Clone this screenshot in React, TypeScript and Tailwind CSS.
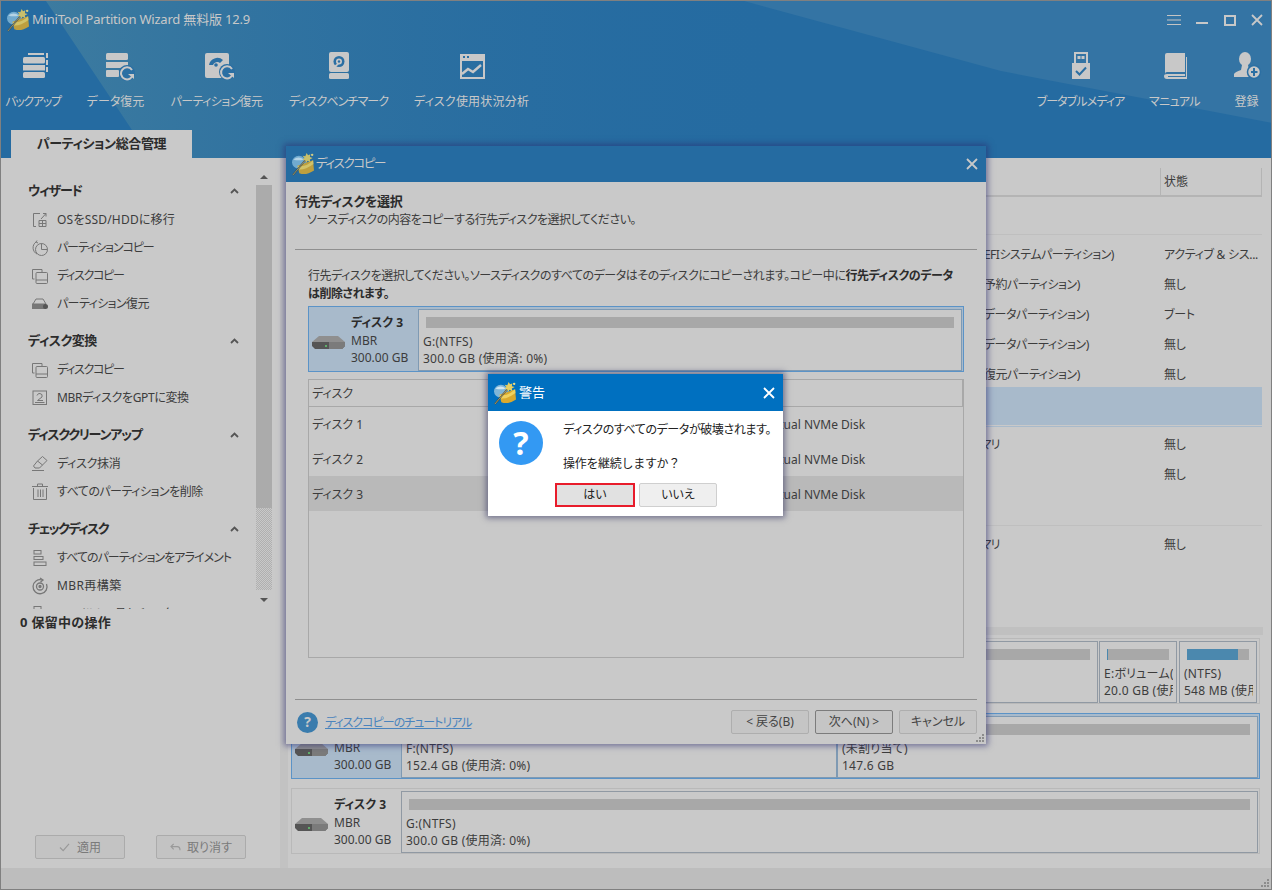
import type { ReactNode } from 'react';

const Logo = ({ className = '' }: { className?: string }) => (
  <svg viewBox="0 0 24 26" className={className}>
    <ellipse cx="7.500" cy="11" rx="7.500" ry="7" fill="#7fb6d8" />
    <path d="M1.500 8 Q7 4 13 8 Q7 10 1.500 8 Z" fill="#cfe6f2" />
    <path d="M6 15 L23 9 L24 20 Q15 26 8 23 Z" fill="#d9a92e" />
    <path d="M6 15 Q15 17 23 9 L23.400 13 Q14 20 7 19 Z" fill="#efd25f" />
    <path d="M1 25 L17 6" stroke="#4f4420" strokeWidth="1.700" />
    <path d="M1 25 L17 6" stroke="#e8e0b0" strokeWidth="0.600" />
    <path d="M16 1 l1.500 2.500 2.500-1-.5 3 3 1-3 1.500 .5 3-3-1.500-1.500 2.500-1-3-3-.5 2-2-2-2.500 3 .5z" fill="#e6cf62" />
    <circle cx="22" cy="3" r="1.300" fill="#f0de80" />
  </svg>
);

const DiskIcon = () => (
  <svg viewBox="0 0 33 15" className="w-[33px] h-[15px] shrink-0">
    <path d="M0 7 L7 1 H26 L33 7 Z" fill="#8f8f8f" />
    <path d="M0 7 H33 V11 L30 14 H3 L0 11 Z" fill="#555" />
    <path d="M17 7 H33 V11 L30 14 H17 Z" fill="#7b7b7b" />
    <rect x="13" y="10" width="2" height="2" fill="#5fae6a" />
  </svg>
);

const ToolIcon = ({ children }: { children: ReactNode }) => (
  <svg viewBox="0 0 32 30" className="w-[32px] h-[30px] fill-[#c8c8c8]">
    {children}
  </svg>
);

const arc = (cx: number, cy: number) => (
  <>
    <circle cx={cx} cy={cy} r="8" fill="#2b6fa3" />
    <path d={`M${cx + 5} ${cy - 3} A6 6 0 1 0 ${cx + 6} ${cy + 1}`} fill="none" strokeWidth="2" stroke="#c8c8c8" />
    <path d={`M${cx + 1} ${cy + 1} h6 v5 z`} />
  </>
);

const tools: { label: string; w: string; track: string; shift: string; icon: ReactNode }[] = [
  {
    label: 'バックアップ',
    w: 'w-[56px]',
    track: 'tracking-[-1.3px]',
    shift: 'ml-[3px]',
    icon: (
      <ToolIcon>
        <path d="M9 2 H25 V4 H9 Z M27 2 h2 v5 h-2 Z M27 9 h2 v5 h-2 Z M27 16 h2 v5 h-2 Z" />
        <rect x="4" y="6" width="22" height="6.500" rx="1.500" />
        <rect x="4" y="14" width="22" height="5.500" />
        <rect x="4" y="21" width="22" height="6" rx="1.500" />
      </ToolIcon>
    ),
  },
  {
    label: 'データ復元',
    w: 'w-[57px]',
    track: 'tracking-normal',
    shift: 'ml-[6px]',
    icon: (
      <ToolIcon>
        <rect x="3" y="2" width="22" height="7" rx="1.500" />
        <rect x="3" y="11" width="22" height="6" />
        <rect x="3" y="19" width="13" height="7" rx="1" />
        {arc(24, 22)}
      </ToolIcon>
    ),
  },
  {
    label: 'パーティション復元',
    w: 'w-[93px]',
    track: 'tracking-[-0.6px]',
    shift: 'ml-[5px]',
    icon: (
      <ToolIcon>
        <rect x="2" y="2" width="24" height="25" rx="2" />
        <path d="M6 14 A8.500 8.500 0 0 1 20 9 L17 12 A4.500 4.500 0 0 0 10 14 Z" fill="#2b6fa3" />
        <circle cx="13" cy="14" r="1.800" fill="#2b6fa3" />
        {arc(24, 21)}
      </ToolIcon>
    ),
  },
  {
    label: 'ディスクベンチマーク',
    w: 'w-[99px]',
    track: 'tracking-[-0.9px]',
    shift: 'ml-0',
    icon: (
      <ToolIcon>
        <rect x="6" y="1" width="20" height="20" rx="2" />
        <rect x="6" y="22" width="20" height="6" rx="1.500" />
        <circle cx="16" cy="10.500" r="5.500" fill="#2b6fa3" />
        <circle cx="16" cy="10.500" r="3" />
        <circle cx="16" cy="10.500" r="1.200" fill="#2b6fa3" />
        <path d="M11 15 l4-3 1 1-3 3z" />
      </ToolIcon>
    ),
  },
  {
    label: 'ディスク使用状況分析',
    w: 'w-[115px]',
    track: 'tracking-[0.2px]',
    shift: 'ml-0',
    icon: (
      <ToolIcon>
        <path fillRule="evenodd" d="M4 3 h25 v25 h-25 Z M6 10 v16 h21 v-16 Z" />
        <rect x="7" y="5" width="2" height="2" fill="#2b6fa3" />
        <rect x="11" y="5" width="2" height="2" fill="#2b6fa3" />
        <path d="M6 23 L12 18 L17 21 L25 14" fill="none" strokeWidth="2.400" stroke="#c8c8c8" />
      </ToolIcon>
    ),
  },
];

const rightTools: { label: string; w: string; track: string; gap: string; icon: ReactNode }[] = [
  {
    label: 'ブータブルメディア',
    w: 'w-[89px]',
    track: 'tracking-[-0.9px]',
    gap: 'ml-0',
    icon: (
      <ToolIcon>
        <path fillRule="evenodd" d="M9 1 h14 v11 h2 v16 h-18 v-16 h2 Z M11 3 v9 h10 v-9 Z" />
        <rect x="12.500" y="5" width="3" height="3" />
        <rect x="16.500" y="5" width="3" height="3" />
        <path d="M11 20 l3.500 3.500 6.500-7" fill="none" strokeWidth="2" stroke="#2b6fa3" />
      </ToolIcon>
    ),
  },
  {
    label: 'マニュアル',
    w: 'w-[51px]',
    track: 'tracking-[-0.6px]',
    gap: 'ml-[24px]',
    icon: (
      <ToolIcon>
        <path d="M6 4 Q6 2 8 2 H26 V21 H8 Q6 21 6 23 Z" />
        <path d="M28 6 V28 H8 Q5 28 5 25 Q5 23 8 23 H26 V25 H9 V26 H27 V6 Z" />
      </ToolIcon>
    ),
  },
  {
    label: '登録',
    w: 'w-[27px]',
    track: 'tracking-normal',
    gap: 'ml-[33px]',
    icon: (
      <ToolIcon>
        <ellipse cx="14" cy="8" rx="6" ry="7" />
        <path d="M11 14 H17 L18 19 L24 22 V26 H3 V23 Q4 21 10 19 Z" />
        <circle cx="23" cy="21" r="6.500" stroke="#2b6fa3" strokeWidth="1.500" />
        <path d="M20 20 h2 v-3 h2 v3 h2.500 v2 h-2.500 v3 h-2 v-3 h-2 z" fill="#2b6fa3" />
      </ToolIcon>
    ),
  },
];

const MenuIcon = ({ kind }: { kind: string }) => {
  const p = { fill: 'none', stroke: '#777', strokeWidth: 1 };
  return (
    <svg viewBox="0 0 18 18" className="w-[18px] h-[18px] shrink-0">
      {kind === 'os' && (
        <g {...p}>
          <path d="M9 2.500 H2.500 V15.500 H5" />
          <path d="M10 8 L15 2.500 M12 2.500 h3 v3" />
          <path d="M8 15.500 V9.500 H15 V15.500 Z M8 12.500 H15 M11.500 9.500 V15.500" />
        </g>
      )}
      {kind === 'pcopy' && (
        <g {...p}>
          <path d="M5 3 A7 7 0 0 0 6 15" />
          <circle cx="10.500" cy="10.500" r="6" />
          <path d="M10.500 4.500 V10.500 H16.500" />
          <path d="M6 1.500 L5 3 L7 4" />
        </g>
      )}
      {kind === 'dcopy' && (
        <g {...p}>
          <path d="M3.500 12 H1.500 V2.500 H11 V5" />
          <rect x="5" y="5.500" width="11.500" height="11" rx="1" />
          <path d="M5 13 H16.500" />
        </g>
      )}
      {kind === 'prec' && (
        <g {...p}>
          <path d="M2 9 L5 4 H12 L15 9" />
          <rect x="1.500" y="9" width="13" height="4.500" fill="#777" />
          <circle cx="14.500" cy="11.500" r="2.500" fill="#555" stroke="none" />
        </g>
      )}
      {kind === 'mbr' && (
        <g {...p}>
          <rect x="2" y="2" width="13.500" height="13.500" />
          <path d="M6 6.500 Q7 4 9 4.500 Q12 5 11 8 L6.500 11.500 H12 M4 13.500 H13.500" />
        </g>
      )}
      {kind === 'erase' && (
        <g {...p}>
          <path d="M6.500 6 L11.500 1.500 L16 5.500 L8.500 13 H4 L2.500 11 Z M6.500 6 L11.500 10" />
          <path d="M1 15.500 H13" />
        </g>
      )}
      {kind === 'trash' && (
        <g {...p}>
          <path d="M1 3.500 H17 M6.500 3.500 V1 H11.500 V3.500" />
          <path d="M2.500 5 V16.500 H15.500 V5 M7 6.500 V14 M9.500 6.500 V14 M12 6.500 V14" />
        </g>
      )}
      {kind === 'align' && (
        <g {...p}>
          <rect x="3" y="1.500" width="7" height="3.500" />
          <rect x="3" y="7.500" width="9" height="3" />
          <rect x="3" y="13" width="12" height="3.500" />
        </g>
      )}
      {kind === 'rebuild' && (
        <g {...p} strokeWidth={1.300}>
          <path d="M11 3 A7 7 0 1 0 15.500 7" />
          <path d="M9 1 L12 3 L9.500 5" />
          <circle cx="9" cy="9.500" r="3.500" />
          <circle cx="9" cy="9.500" r="1" fill="#777" />
        </g>
      )}
    </svg>
  );
};

const sections = [
  {
    title: 'ウィザード',
    track: 'tracking-[-1.2px]',
    items: [
      ['os', 'OSをSSD/HDDに移行', 'tracking-[0.2px]'],
      ['pcopy', 'パーティションコピー', 'tracking-[-1.1px]'],
      ['dcopy', 'ディスクコピー', 'tracking-[-1.3px]'],
      ['prec', 'パーティション復元', 'tracking-[-0.6px]'],
    ],
  },
  {
    title: 'ディスク変換',
    track: 'tracking-[-0.5px]',
    items: [
      ['dcopy', 'ディスクコピー', 'tracking-[-1.3px]'],
      ['mbr', 'MBRディスクをGPTに変換', 'tracking-[-0.35px]'],
    ],
  },
  {
    title: 'ディスククリーンアップ',
    track: 'tracking-[-1.2px]',
    items: [
      ['erase', 'ディスク抹消', 'tracking-[-0.3px]'],
      ['trash', 'すべてのパーティションを削除', 'tracking-[-0.5px]'],
    ],
  },
  {
    title: 'チェックディスク',
    track: 'tracking-[-1.5px]',
    items: [
      ['align', 'すべてのパーティションをアライメント', 'tracking-[-0.95px]'],
      ['rebuild', 'MBR再構築', 'tracking-[0.4px]'],
      ['align', 'ファイルシステムチェック', 'tracking-[-0.9px]'],
    ],
  },
];

const rows = [
  { type: 'GPT (EFIシステムパーティション)', status: 'アクティブ & シス...' },
  { type: 'GPT (予約パーティション)', status: '無し' },
  { type: 'GPT (データパーティション)', status: 'ブート' },
  { type: 'GPT (データパーティション)', status: '無し' },
  { type: 'GPT (復元パーティション)', status: '無し' },
];

const TableRow = ({ type, status, primary = false }: { type: string; status: string; primary?: boolean }) => (
  <div className="h-[30px] shrink-0 flex items-center text-[12px] text-[#3c3c3c] whitespace-nowrap">
    <span className={`w-[876px] ${primary ? 'pl-[663px] tracking-[-0.8px]' : 'pl-[669px] tracking-[-0.5px]'}`}>{type}</span>
    <span className="tracking-[-0.3px]">{status}</span>
  </div>
);

const Partition = ({
  label,
  size,
  className = '',
  fill,
  selected = false,
}: {
  label: string;
  size: string;
  className?: string;
  fill?: string;
  selected?: boolean;
}) => (
  <div className={`h-[62px] border whitespace-nowrap text-[12px] tracking-[0.25px] text-[#3c3c3c] bg-[#c9c9c9] ${selected ? 'border-[#7f9ab3]' : 'border-[#9099a3]'} ${className}`}>
    <div className="h-[11px] mx-[7px] mt-[7px] bg-[#a8a8a8] flex">
      {fill && <div className={`h-full bg-[#4b88ae] ${fill}`} />}
    </div>
    <div className="ml-[4px] mr-[3px] overflow-hidden mt-[5px] leading-[17px]">{label}</div>
    <div className="ml-[4px] mr-[3px] overflow-hidden leading-[18px]">{size}</div>
  </div>
);

const DiskRow = ({
  name,
  selected = false,
  children,
}: {
  name: string;
  selected?: boolean;
  children: ReactNode;
}) => (
  <div className={`h-[66px] flex border py-[2px] pr-[1px] ${selected ? 'border-[#5b93c7] bg-[#a8bacb]' : 'border-[#b9b9b9]'}`}>
    <div className="w-[109px] shrink-0 flex pl-[3px]">
      <div className="mt-[26px]">
        <DiskIcon />
      </div>
      <div className="ml-[6px] text-[12px] leading-[17.5px] text-[#3c3c3c] whitespace-nowrap pt-[6px]">
        <div className="font-bold text-[#2c2c2c] leading-[16.5px]">{name}</div>
        <div>MBR</div>
        <div>300.00 GB</div>
      </div>
    </div>
    {children}
  </div>
);

const Grip = ({ className = '' }: { className?: string }) => (
  <svg viewBox="0 0 10 10" className={`w-[10px] h-[10px] fill-[#8c8c8c] ${className}`}>
    <rect x="7" y="1" width="2" height="2" />
    <rect x="4" y="4" width="2" height="2" />
    <rect x="7" y="4" width="2" height="2" />
    <rect x="1" y="7" width="2" height="2" />
    <rect x="4" y="7" width="2" height="2" />
    <rect x="7" y="7" width="2" height="2" />
  </svg>
);

const Close = ({ stroke }: { stroke: string }) => (
  <svg viewBox="0 0 12 12" className="w-[12px] h-[12px]" fill="none" stroke={stroke} strokeWidth="1.800">
    <path d="M1 1 L11 11 M11 1 L1 11" />
  </svg>
);

const Caret = () => (
  <svg viewBox="0 0 9 6" className="w-[9px] h-[6px]" fill="none" stroke="#555" strokeWidth="1.800">
    <path d="M1 5 L4.500 1.500 L8 5" />
  </svg>
);

const DlgButton = ({ label, active = false }: { label: string; active?: boolean }) => (
  <div className={`w-[78px] h-[24px] flex items-center justify-center rounded-[2px] border text-[12px] text-[#444] bg-[#c5c5c5] ${active ? 'border-[#7c7c7c]' : 'border-[#aeaeae]'}`}>
    {label}
  </div>
);

export default function App() {
  return (
    <div className="relative w-[1272px] h-[890px] overflow-hidden flex flex-col border border-[#808080] bg-[#c9c9c9] [font-family:'Noto_Sans','Noto_Sans_CJK_JP',sans-serif] [font-feature-settings:'palt'] text-[#3c3c3c]">
      {/* header */}
      <header className="relative h-[157px] shrink-0 bg-[#256ba1] overflow-hidden">
        <svg viewBox="0 0 1270 157" className="absolute inset-0 w-full h-full">
          <defs>
            <linearGradient id="wedge" x1="0" x2="1" y1="0" y2="0">
              <stop offset="0" stopColor="#44809f" stopOpacity="0.75" />
              <stop offset="1" stopColor="#256ba1" stopOpacity="0" />
            </linearGradient>
          </defs>
          <polygon points="45,0 137,138 146,157 800,157 800,0" fill="url(#wedge)" />
          <polygon points="743,0 1000,70 1271,122 1271,0" fill="#3474a4" />
        </svg>
        <div className="relative h-[38px] flex items-center pl-[6px]">
          <Logo className="w-[22px] h-[24px] opacity-85" />
          <span className="ml-[3px] text-[13px] tracking-[-0.2px] text-[#c8c8c8] whitespace-nowrap">MiniTool Partition Wizard 無料版 12.9</span>
          <div className="ml-auto flex items-center gap-[15px] pr-[8px]">
            <svg viewBox="0 0 14 12" className="w-[14px] h-[12px]" fill="none" stroke="#c4c4c4">
              <path d="M0 1.500 H14 M0 6 H14 M0 10.500 H14" />
            </svg>
            <div className="w-[12px] h-[2px] mt-[5px] bg-[#c8c8c8]" />
            <div className="w-[12px] h-[11px] border-2 border-[#c8c8c8] ml-[1px]" />
            <Close stroke="#c8c8c8" />
          </div>
        </div>
        <div className="relative flex justify-between pl-[4px] pr-[11px] mt-[12px]">
          <div className="flex gap-[26px]">
            {tools.map((t) => (
              <div key={t.label} className={`${t.w} flex flex-col items-center`}>
                <div className={`h-[30px] flex justify-center ${t.shift}`}>{t.icon}</div>
                <div className={`mt-[12px] text-[12px] leading-[18px] whitespace-nowrap text-[#c8c8c8] ${t.track}`}>{t.label}</div>
              </div>
            ))}
          </div>
          <div className="flex">
            {rightTools.map((t) => (
              <div key={t.label} className={`${t.w} ${t.gap} flex flex-col items-center`}>
                <div className="h-[30px] flex justify-center">{t.icon}</div>
                <div className={`mt-[12px] text-[12px] leading-[18px] whitespace-nowrap text-[#c8c8c8] ${t.track}`}>{t.label}</div>
              </div>
            ))}
          </div>
        </div>
        <div className="absolute left-[10px] bottom-0 w-[181px] h-[28px] bg-[#c9c9c9] flex items-center justify-center text-[13px] tracking-[-0.4px] font-bold text-[#2c2c2c]">
          パーティション総合管理
        </div>
      </header>

      <div className="flex-1 min-h-0 flex">
        {/* sidebar */}
        <aside className="w-[279px] shrink-0 flex flex-col">
          <div className="h-[441px] mt-[10px] overflow-hidden flex">
            <div className="w-[255px] pt-[8px]">
              {sections.map((s) => (
                <div key={s.title} className="mb-[8px]">
                  <div className="h-[30px] flex items-center justify-between pl-[27px] pr-[17px] text-[13px] font-bold text-[#2c2c2c]">
                    <span className={s.track}>{s.title}</span>
                    <Caret />
                  </div>
                  {s.items.map(([icon, label, track], i) => (
                    <div key={i} className="h-[28px] flex items-center pl-[30px] text-[12px] whitespace-nowrap">
                      <MenuIcon kind={icon} />
                      <span className={`ml-[8px] ${track}`}>{label}</span>
                    </div>
                  ))}
                </div>
              ))}
            </div>
            <div className="w-[16px] flex flex-col items-center">
              <div className="h-[17px] w-full flex items-center justify-center">
                <div className="w-0 h-0 border-x-[4px] border-x-transparent border-b-[4px] border-b-[#555]" />
              </div>
              <div className="w-full h-[323px] bg-[#ababab]" />
              <div className="w-full h-[82px] bg-[repeating-conic-gradient(#b0b0b0_0_25%,#c9c9c9_0_50%)] bg-[length:2px_2px]" />
              <div className="h-[19px] w-full flex items-center justify-center">
                <div className="w-0 h-0 border-x-[4px] border-x-transparent border-t-[4px] border-t-[#555]" />
              </div>
            </div>
          </div>
          <div className="pl-[19px] mt-[4px] text-[13px] tracking-[0.3px] font-bold leading-[18px] text-[#2c2c2c]">0 保留中の操作</div>
          <div className="mt-auto mb-[9px] flex gap-[31px] pl-[34px]">
            <div className="w-[90px] h-[24px] pt-[1px] rounded-[2px] border border-[#ababab] bg-[#c3c3c3] flex items-center justify-center gap-[7px] text-[12px] text-[#7a7a7a]">
              <svg viewBox="0 0 12 10" className="w-[11px] h-[9px]" fill="none" stroke="#999" strokeWidth="1.300">
                <path d="M1 5 L4.500 8.500 L11 1" />
              </svg>
              適用
            </div>
            <div className="w-[90px] h-[24px] pt-[1px] rounded-[2px] border border-[#ababab] bg-[#c3c3c3] flex items-center justify-center gap-[6px] text-[12px] text-[#7a7a7a]">
              <svg viewBox="0 0 12 10" className="w-[11px] h-[9px]" fill="none" stroke="#999" strokeWidth="1.300">
                <path d="M4 1 L1 4 L4 7 M1 4 H8 Q11 4 11 8" />
              </svg>
              取り消す
            </div>
          </div>
        </aside>
        <div className="w-[8px] shrink-0 bg-[#c2c2c2]" />

        {/* partition list + disk map */}
        <main className="flex-1 min-w-0 flex flex-col pt-[10px]">
          <div className="h-[29px] shrink-0 flex justify-end border-b-2 border-[#b4b4b4] mr-[9px]">
            <div className="w-[102px] border-x border-[#b4b4b4] pl-[3px] pt-[1px] flex items-center text-[12px]">状態</div>
          </div>
          <div className="h-[38px] shrink-0 border-b border-[#bfbfbf] mr-[9px]" />
          <div className="h-[5px] shrink-0" />
          {rows.map((r, i) => (
            <TableRow key={i} type={r.type} status={r.status} />
          ))}
          <div className="h-[38px] -mt-[3px] shrink-0 mr-[9px] bg-[#a8bacb]" />
          <div className="h-[1px] mt-[1px] shrink-0 mr-[9px] bg-[#a8bacb]" />
          <div className="h-[3px] shrink-0" />
          <TableRow type="プライマリ" status="無し" primary />
          <TableRow type="" status="無し" />
          <div className="h-[36px] shrink-0 border-b border-[#bfbfbf] mr-[9px]" />
          <div className="h-[4px] shrink-0" />
          <TableRow type="プライマリ" status="無し" primary />
          <div className="flex-1" />

          <div className="h-[8px] shrink-0 mr-[8px] bg-[#c0c0c0]" />
          <div className="mt-[3px] ml-[3px] mr-[11px] mb-[14px] flex flex-col gap-[9px]">
            <DiskRow name="ディスク 1">
              <Partition className="flex-1 min-w-0" label="C:(NTFS)" size="" />
              <Partition className="w-[78px] ml-[1px]" label="E:ボリューム(NTFS)" size="20.0 GB (使用済: 0%)" fill="w-[1px]" />
              <Partition className="w-[78px] ml-[2px] mr-[1px]" label="(NTFS)" size="548 MB (使用済: 80%)" fill="w-[82%]" />
            </DiskRow>
            <DiskRow name="ディスク 2" selected>
              <Partition className="w-[436px]" label="F:(NTFS)" size="152.4 GB (使用済: 0%)" selected />
              <Partition className="flex-1 min-w-0" label="(未割り当て)" size="147.6 GB" selected />
            </DiskRow>
            <DiskRow name="ディスク 3">
              <Partition className="flex-1 min-w-0" label="G:(NTFS)" size="300.0 GB (使用済: 0%)" />
            </DiskRow>
          </div>
        </main>
      </div>

      <footer className="relative h-[21px] shrink-0 bg-[#bdbdbd]">
        <Grip className="absolute right-[1px] bottom-[1px]" />
      </footer>

      {/* disk copy dialog */}
      <div className="absolute left-[285px] top-[145px] w-[700px] h-[598px] flex flex-col bg-[#c9c9c9] shadow-[0_0_6px_2px_rgba(40,40,110,0.55)]">
        <div className="h-[36px] shrink-0 bg-[#256ba1] flex items-center pl-[6px] pr-[8px]">
          <Logo className="w-[22px] h-[24px] opacity-85" />
          <span className="ml-[2px] text-[12.5px] tracking-[-1.4px] text-[#c8c8c8]">ディスクコピー</span>
          <div className="ml-auto">
            <Close stroke="#c8c8c8" />
          </div>
        </div>
        <div className="pl-[9px] pt-[10px] text-[13px] tracking-[-0.3px] font-bold leading-[18px] text-[#2c2c2c]">行先ディスクを選択</div>
        <div className="pl-[21px] pt-[1px] text-[12px] tracking-[-0.5px] leading-[18px]">ソースディスクの内容をコピーする行先ディスクを選択してください。</div>
        <div className="h-px mx-[9px] mt-[20px] bg-[#8f8f8f]" />
        <div className="pl-[22px] mt-[17px] text-[12px] tracking-[-0.45px] leading-[18px]">
          行先ディスクを選択してください。ソースディスクのすべてのデータはそのディスクにコピーされます。コピー中に<b className="text-[#2c2c2c]">行先ディスクのデータ</b>
          <br />
          <b className="text-[#2c2c2c]">は削除されます。</b>
        </div>
        <div className="ml-[22px] w-[656px] mt-[3px]">
          <DiskRow name="ディスク 3" selected>
            <Partition className="flex-1 min-w-0" label="G:(NTFS)" size="300.0 GB (使用済: 0%)" selected />
          </DiskRow>
        </div>
        <div className="ml-[22px] w-[656px] h-[279px] mt-[7px] border border-[#a8a8a8] text-[12px]">
          <div className="h-[27px] pt-[1px] flex items-center pl-[3px] border-b border-[#a8a8a8] relative">
            ディスク
            <div className="absolute right-0 top-0 bottom-0 w-px bg-[#a8a8a8]" />
          </div>
          {['ディスク 1', 'ディスク 2'].map((d) => (
            <div key={d} className="h-[35px] flex items-center pl-[3px]">
              <span className="w-[452px]">{d}</span>
              <span>Virtual NVMe Disk</span>
            </div>
          ))}
          <div className="h-[35px] -mt-[1px] pt-[2px] flex items-center pl-[3px] bg-[#b9b9b9]">
            <span className="w-[452px]">ディスク 3</span>
            <span>Virtual NVMe Disk</span>
          </div>
        </div>
        <div className="h-px mx-[9px] mt-[41px] bg-[#8f8f8f]" />
        <div className="flex items-center pl-[11px] pr-[9px] mt-[10px]">
          <div className="w-[21px] h-[21px] rounded-full bg-[#3a7cad] flex items-center justify-center text-[14px] font-bold leading-none text-[#c8c8c8]">?</div>
          <span className="ml-[7px] pt-[1px] text-[12px] tracking-[-1px] text-[#4a84bd] underline">ディスクコピーのチュートリアル</span>
          <div className="ml-auto flex gap-[6px]">
            <DlgButton label="<  戻る(B)" />
            <DlgButton label="次へ(N)  >" active />
            <DlgButton label="キャンセル" />
          </div>
        </div>
        <Grip className="absolute right-[1px] bottom-[1px]" />
      </div>

      {/* warning modal */}
      <div className="absolute left-[487px] top-[373px] w-[295px] h-[142px] flex flex-col bg-white shadow-[0_0_6px_2px_rgba(40,40,90,0.55)]">
        <div className="h-[37px] shrink-0 bg-[#0070c0] flex items-center pl-[6px] pr-[8px]">
          <Logo className="w-[22px] h-[24px]" />
          <span className="ml-[3px] text-[13px] text-white">警告</span>
          <div className="ml-auto">
            <Close stroke="#ffffff" />
          </div>
        </div>
        <div className="flex-1 flex pl-[11px] pt-[10px]">
          <div className="w-[44px] h-[44px] rounded-full bg-[#3399f3] flex items-center justify-center text-[32px] font-bold leading-none text-white">?</div>
          <div className="ml-[20px] text-[12px] text-[#222] leading-[17px] whitespace-nowrap">
            <div className="tracking-[-0.4px]">ディスクのすべてのデータが破壊されます。</div>
            <div className="mt-[17px] [font-feature-settings:normal] tracking-[-0.3px]">操作を継続しますか？</div>
          </div>
        </div>
        <div className="flex gap-[4px] pl-[67px] pb-[9px] text-[12px] text-[#222]">
          <div className="w-[80px] h-[24px] border-2 border-[#e81c2b] bg-[#e1e1e1] flex items-center justify-center">はい</div>
          <div className="w-[78px] h-[24px] border border-[#cfcfcf] rounded-[2px] bg-[#efefef] flex items-center justify-center">いいえ</div>
        </div>
      </div>
    </div>
  );
}
